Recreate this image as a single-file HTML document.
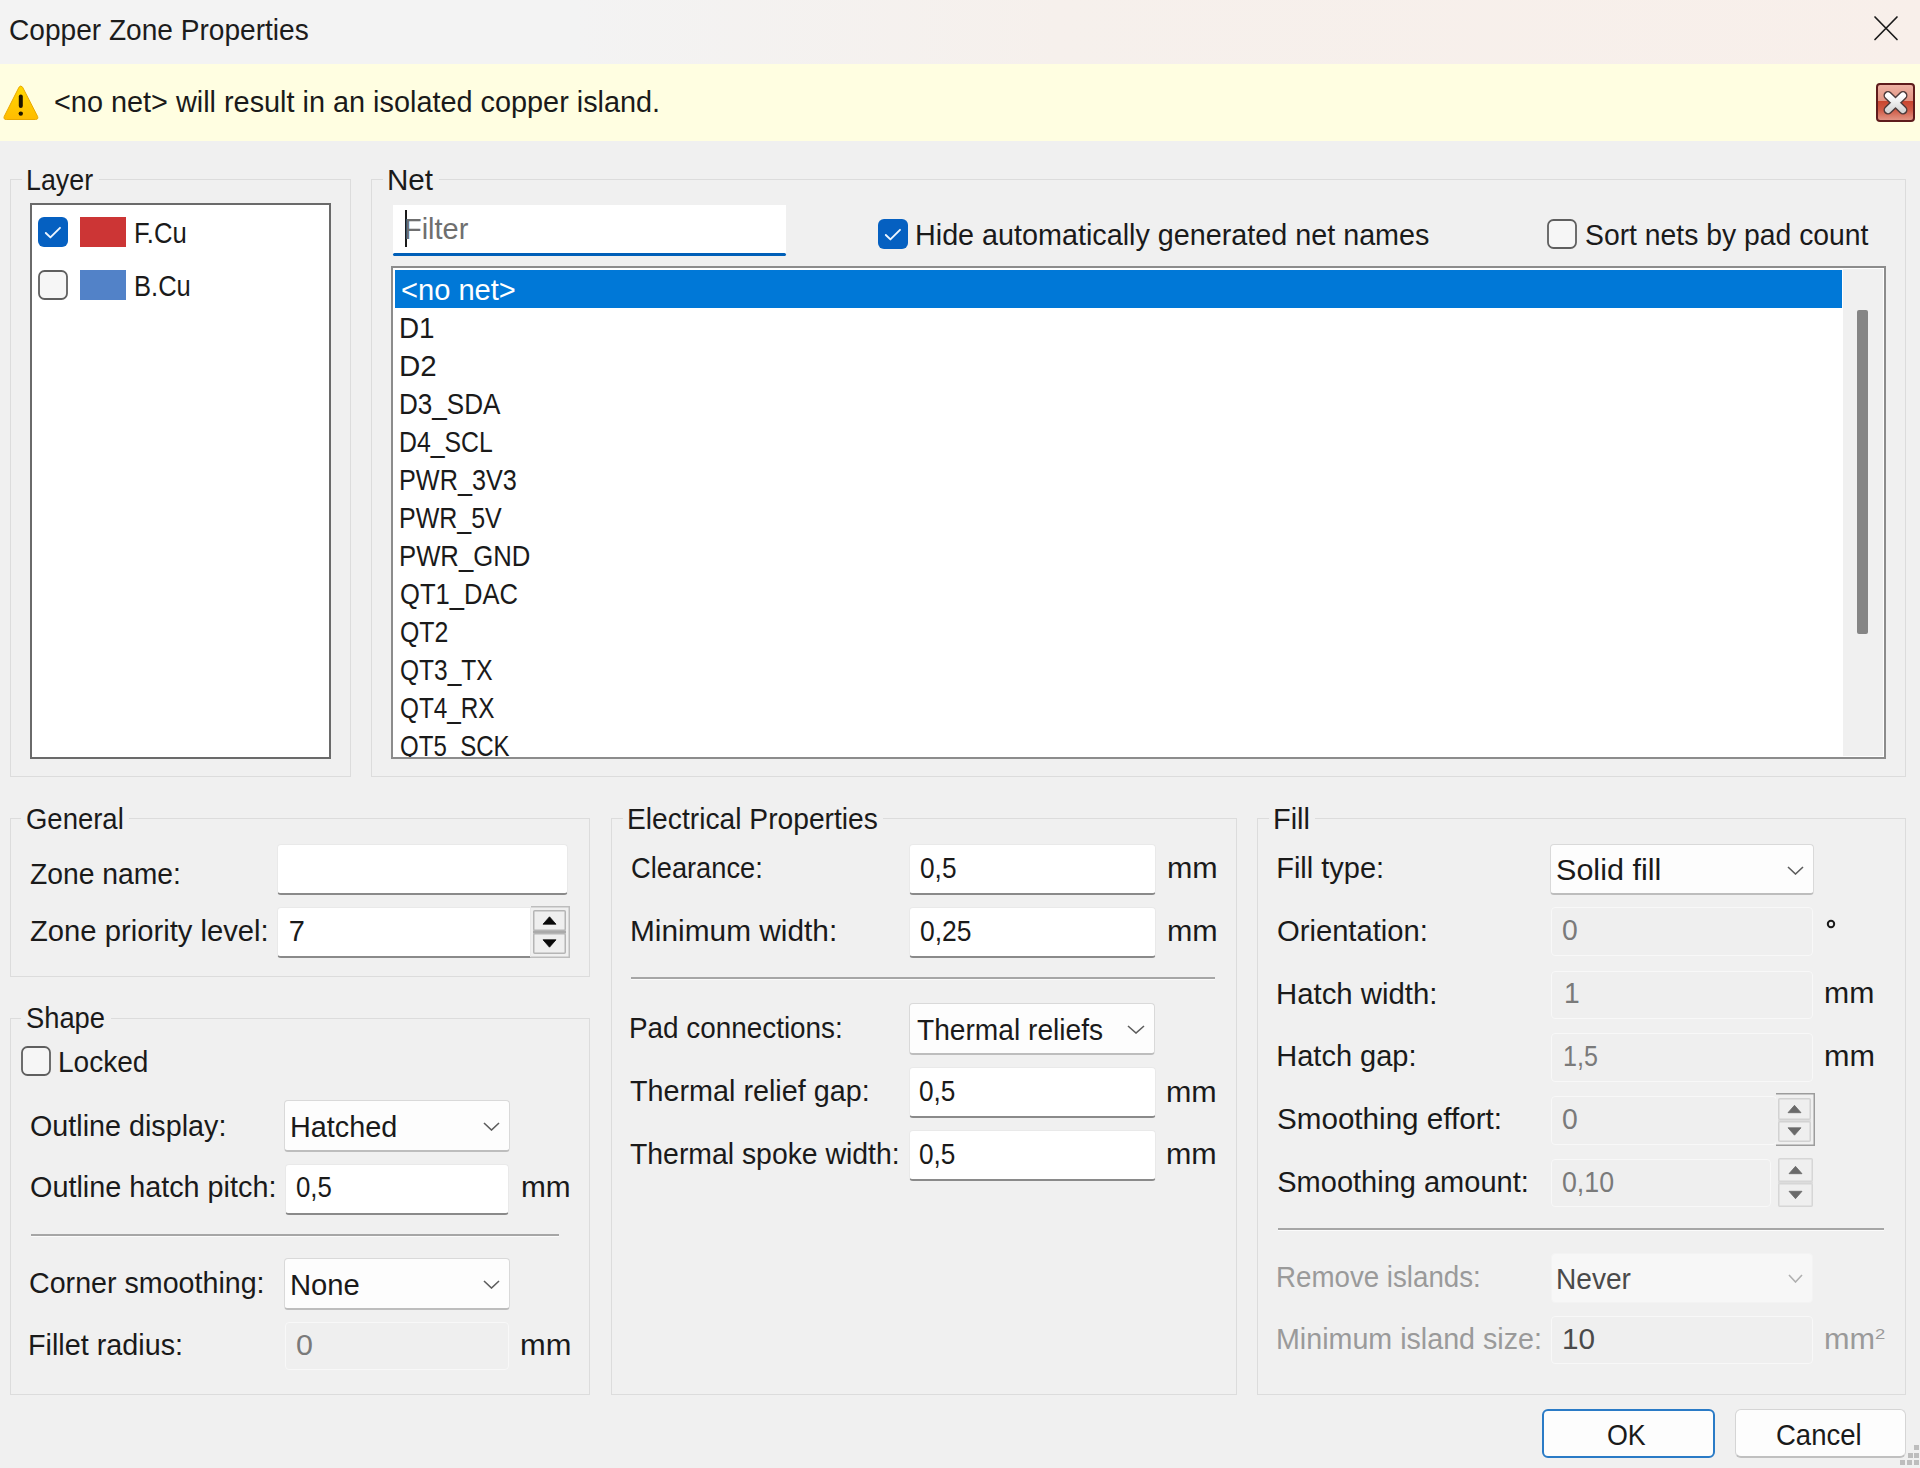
<!DOCTYPE html>
<html><head><meta charset="utf-8"><title>Copper Zone Properties</title>
<style>
html,body{margin:0;padding:0;}
body{width:1920px;height:1468px;position:relative;overflow:hidden;background:#f0f0f0;font-family:"Liberation Sans",sans-serif;}
body div, body svg{position:absolute;}
.t{white-space:pre;line-height:1;transform-origin:0 0;}
</style></head><body>
<div style="left:0px;top:0px;width:1920px;height:64px;background:linear-gradient(to right,#f3f3f3 0%,#f3f3f3 30%,#f6f0ec 55%,#f8efea 100%);"></div>
<div class="t" style="left:9.20px;top:16.20px;font-size:29px;color:#1c1c1c;transform:scaleX(0.9684);">Copper Zone Properties</div>
<svg style="left:1872px;top:14px;" width="28" height="28" viewBox="0 0 28 28"><path d="M3,3 L25,25.5 M25,3 L3,25.5" stroke="#1a1a1a" stroke-width="1.7" stroke-linecap="round"/></svg>
<div style="left:0px;top:64px;width:1920px;height:77px;background:#fffee1;"></div>
<svg style="left:2px;top:84px;" width="38" height="38" viewBox="0 0 38 38"><defs><linearGradient id="wg" x1="0" y1="0" x2="0" y2="1"><stop offset="0" stop-color="#ffd800"/><stop offset="1" stop-color="#ffbc00"/></linearGradient></defs><path d="M17,3.2 Q18.8,0.8 20.6,3.2 L35.6,32.5 Q36.6,35.5 33.5,35.5 L4.3,35.5 Q1.2,35.5 2.2,32.5 Z" fill="url(#wg)" stroke="#e9a800" stroke-width="1"/><rect x="16.8" y="10.5" width="4" height="13.5" rx="2" fill="#1d1400"/><circle cx="18.8" cy="29.6" r="2.2" fill="#1d1400"/></svg>
<div class="t" style="left:53.56px;top:88.20px;font-size:29px;color:#1a1a1a;transform:scaleX(0.9947);">&lt;no net&gt; will result in an isolated copper island.</div>
<svg style="left:1876px;top:83px;" width="39" height="39" viewBox="0 0 39 39"><defs><linearGradient id="cg" x1="0" y1="0" x2="0" y2="1"><stop offset="0" stop-color="#eeb3a4"/><stop offset="0.45" stop-color="#e39584"/><stop offset="0.46" stop-color="#c9452e"/><stop offset="0.7" stop-color="#cf5a45"/><stop offset="1" stop-color="#e49a8a"/></linearGradient></defs><rect x="1" y="1" width="37" height="37" rx="3" fill="url(#cg)" stroke="#5e1c1c" stroke-width="2"/><defs><linearGradient id="xg" x1="0" y1="0" x2="0" y2="1"><stop offset="0" stop-color="#ffffff"/><stop offset="1" stop-color="#d8d8d8"/></linearGradient></defs><path d="M12,12.5 L27,27 M27,12.5 L12,27" stroke="#4d3b3b" stroke-width="9" stroke-linecap="round"/><path d="M12,12.5 L27,27 M27,12.5 L12,27" stroke="url(#xg)" stroke-width="6" stroke-linecap="round"/></svg>
<div style="left:10px;top:179px;width:341px;height:598px;border:1px solid #dcdcdc;box-sizing:border-box;"></div>
<div style="left:22px;top:177px;width:77px;height:5px;background:#f0f0f0;"></div>
<div class="t" style="left:25.85px;top:166.20px;font-size:29px;color:#1a1a1a;transform:scaleX(0.9248);">Layer</div>
<div style="left:30px;top:203px;width:301px;height:556px;background:#fff;border:2px solid #6a6a6a;box-sizing:border-box;"></div>
<svg style="left:38px;top:217px;" width="30" height="30" viewBox="0 0 30 30"><rect x="0" y="0" width="30" height="30" rx="6" fill="#0560c1"/><polyline points="7.8,16 12.4,20.4 22,10.8" fill="none" stroke="#eef6ff" stroke-width="1.9" stroke-linecap="round" stroke-linejoin="round"/></svg>
<div style="left:80px;top:217px;width:46px;height:30px;background:#cc3535;"></div>
<div class="t" style="left:133.95px;top:218.70px;font-size:29px;color:#1a1a1a;transform:scaleX(0.8846);">F.Cu</div>
<svg style="left:38px;top:270px;" width="30" height="30" viewBox="0 0 30 30"><rect x="1" y="1" width="28" height="28" rx="5.5" fill="#f6f6f6" stroke="#5f5f5f" stroke-width="1.8"/></svg>
<div style="left:80px;top:270px;width:46px;height:30px;background:#5282c8;"></div>
<div class="t" style="left:133.96px;top:271.70px;font-size:29px;color:#1a1a1a;transform:scaleX(0.8808);">B.Cu</div>
<div style="left:371px;top:179px;width:1535px;height:598px;border:1px solid #dcdcdc;box-sizing:border-box;"></div>
<div style="left:383px;top:177px;width:56px;height:5px;background:#f0f0f0;"></div>
<div class="t" style="left:386.63px;top:166.20px;font-size:29px;color:#1a1a1a;transform:scaleX(1.0204);">Net</div>
<div style="left:393px;top:205px;width:393px;height:51px;background:#fff;"></div>
<div style="left:393px;top:253px;width:393px;height:3px;background:#005fb8;border-radius:2px;"></div>
<div style="left:404.5px;top:210px;width:2.0px;height:37px;background:#1a1a1a;"></div>
<div class="t" style="left:403.68px;top:214.95px;font-size:29px;color:#6f6f6f;transform:scaleX(0.9980);">Filter</div>
<svg style="left:878px;top:219px;" width="30" height="30" viewBox="0 0 30 30"><rect x="0" y="0" width="30" height="30" rx="6" fill="#0560c1"/><polyline points="7.8,16 12.4,20.4 22,10.8" fill="none" stroke="#eef6ff" stroke-width="1.9" stroke-linecap="round" stroke-linejoin="round"/></svg>
<div class="t" style="left:915.20px;top:221.20px;font-size:29px;color:#1a1a1a;transform:scaleX(0.9910);">Hide automatically generated net names</div>
<svg style="left:1547px;top:219px;" width="30" height="30" viewBox="0 0 30 30"><rect x="1" y="1" width="28" height="28" rx="5.5" fill="#f6f6f6" stroke="#5f5f5f" stroke-width="1.8"/></svg>
<div class="t" style="left:1584.73px;top:221.20px;font-size:29px;color:#1a1a1a;transform:scaleX(0.9768);">Sort nets by pad count</div>
<div style="left:391px;top:266px;width:1495px;height:493px;background:#fff;border:2px solid #8c8c8c;box-sizing:border-box;"></div>
<div style="left:1843px;top:269px;width:40px;height:487px;background:#f0f0f0;"></div>
<div style="left:1857px;top:310px;width:11px;height:324px;background:#858585;border-radius:2px;"></div>
<div style="left:395px;top:270px;width:1447px;height:38px;background:#0078d7;"></div>
<div style="left:393px;top:268px;width:1450px;height:489px;overflow:hidden;">
<div class="t" style="left:8.05px;top:7.70px;font-size:29px;color:#ffffff;transform:scaleX(1.0031);">&lt;no net&gt;</div>
<div class="t" style="left:5.77px;top:45.70px;font-size:29px;color:#1a1a1a;transform:scaleX(0.9595);">D1</div>
<div class="t" style="left:5.64px;top:83.70px;font-size:29px;color:#1a1a1a;transform:scaleX(1.0179);">D2</div>
<div class="t" style="left:5.91px;top:121.70px;font-size:29px;color:#1a1a1a;transform:scaleX(0.8996);">D3_SDA</div>
<div class="t" style="left:6.02px;top:159.70px;font-size:29px;color:#1a1a1a;transform:scaleX(0.8550);">D4_SCL</div>
<div class="t" style="left:5.98px;top:197.70px;font-size:29px;color:#1a1a1a;transform:scaleX(0.8702);">PWR_3V3</div>
<div class="t" style="left:6.00px;top:235.70px;font-size:29px;color:#1a1a1a;transform:scaleX(0.8619);">PWR_5V</div>
<div class="t" style="left:5.95px;top:273.70px;font-size:29px;color:#1a1a1a;transform:scaleX(0.8854);">PWR_GND</div>
<div class="t" style="left:6.85px;top:311.70px;font-size:29px;color:#1a1a1a;transform:scaleX(0.8815);">QT1_DAC</div>
<div class="t" style="left:6.88px;top:349.70px;font-size:29px;color:#1a1a1a;transform:scaleX(0.8574);">QT2</div>
<div class="t" style="left:6.90px;top:387.70px;font-size:29px;color:#1a1a1a;transform:scaleX(0.8458);">QT3_TX</div>
<div class="t" style="left:6.91px;top:425.70px;font-size:29px;color:#1a1a1a;transform:scaleX(0.8384);">QT4_RX</div>
<div class="t" style="left:6.92px;top:463.70px;font-size:29px;color:#1a1a1a;transform:scaleX(0.8291);">QT5_SCK</div>
</div>
<div style="left:10px;top:818px;width:580px;height:159px;border:1px solid #dcdcdc;box-sizing:border-box;"></div>
<div style="left:21px;top:816px;width:108px;height:5px;background:#f0f0f0;"></div>
<div class="t" style="left:26.13px;top:804.95px;font-size:29px;color:#1a1a1a;transform:scaleX(0.9473);">General</div>
<div class="t" style="left:29.65px;top:859.95px;font-size:29px;color:#1a1a1a;transform:scaleX(0.9753);">Zone name:</div>
<div style="left:277px;top:844px;width:291px;height:51px;background:#fff;border:1px solid #e9e9e9;border-bottom:2px solid #8a8a8a;border-radius:4px;box-sizing:border-box;"></div>
<div class="t" style="left:29.62px;top:917.45px;font-size:29px;color:#1a1a1a;transform:scaleX(1.0073);">Zone priority level:</div>
<div style="left:277px;top:907px;width:254px;height:51px;background:#fff;border:1px solid #e9e9e9;border-bottom:2px solid #8a8a8a;border-radius:4px 0 0 4px;box-sizing:border-box;"></div>
<svg style="left:530px;top:905px;" width="41" height="54" viewBox="530 905 41 54"><path d="M531,906.75 L569.25,906.75 L569.25,957.25 L531,957.25" fill="#f0f0f0" stroke="#bdbdbd" stroke-width="1.5"/><rect x="533" y="930.5" width="33" height="3" fill="#aaaaaa"/><rect x="533.75" y="910.75" width="31.5" height="19.5" rx="1" fill="#efefef" stroke="#b5b5b5" stroke-width="1.5"/><rect x="533.75" y="933.75" width="31.5" height="19.5" rx="1" fill="#efefef" stroke="#b5b5b5" stroke-width="1.5"/><polygon points="543.0,924.2 556.0,924.2 549.5,916.8" fill="#0a0a0a" stroke="#0a0a0a" stroke-width="0.8" stroke-linejoin="round"/><polygon points="543.0,939.8 556.0,939.8 549.5,947.2" fill="#0a0a0a" stroke="#0a0a0a" stroke-width="0.8" stroke-linejoin="round"/></svg>
<div class="t" style="left:288.85px;top:917.20px;font-size:29px;color:#1a1a1a;">7</div>
<div style="left:10px;top:1018px;width:580px;height:377px;border:1px solid #dcdcdc;box-sizing:border-box;"></div>
<div style="left:21px;top:1016px;width:90px;height:5px;background:#f0f0f0;"></div>
<div class="t" style="left:26.27px;top:1004.20px;font-size:29px;color:#1a1a1a;transform:scaleX(0.9421);">Shape</div>
<svg style="left:21px;top:1046px;" width="30" height="30" viewBox="0 0 30 30"><rect x="1" y="1" width="28" height="28" rx="5.5" fill="#f6f6f6" stroke="#5f5f5f" stroke-width="1.8"/></svg>
<div class="t" style="left:58.06px;top:1048.20px;font-size:29px;color:#1a1a1a;transform:scaleX(0.9673);">Locked</div>
<div class="t" style="left:29.51px;top:1111.50px;font-size:29px;color:#1a1a1a;transform:scaleX(0.9907);">Outline display:</div>
<div style="left:284px;top:1100px;width:226px;height:52px;background:#fdfdfd;border:1px solid #d9d9d9;border-bottom:2px solid #bdbdbd;border-radius:4px;box-sizing:border-box;"></div>
<div class="t" style="left:290.00px;top:1112.80px;font-size:29px;color:#1a1a1a;transform:scaleX(0.9931);">Hatched</div>
<svg style="left:483px;top:1122px;" width="17" height="9" viewBox="0 0 17 9"><polyline points="1,1 8.5,8 16,1" fill="none" stroke="#5c5c5c" stroke-width="1.6"/></svg>
<div class="t" style="left:29.50px;top:1173.40px;font-size:29px;color:#1a1a1a;transform:scaleX(0.9925);">Outline hatch pitch:</div>
<div style="left:285px;top:1164px;width:224px;height:51px;background:#fff;border:1px solid #e9e9e9;border-bottom:2px solid #8a8a8a;border-radius:4px;box-sizing:border-box;"></div>
<div class="t" style="left:296.47px;top:1173.40px;font-size:29px;color:#1a1a1a;transform:scaleX(0.8897);">0,5</div>
<div class="t" style="left:520.56px;top:1173.20px;font-size:29px;color:#1a1a1a;transform:scaleX(1.0278);">mm</div>
<div style="left:31px;top:1234px;width:528px;height:2px;background:#a6a6a6;"></div>
<div style="left:31px;top:1236px;width:528px;height:1px;background:#fbfbfb;"></div>
<div class="t" style="left:29.27px;top:1268.50px;font-size:29px;color:#1a1a1a;transform:scaleX(0.9874);">Corner smoothing:</div>
<div style="left:284px;top:1258px;width:226px;height:52px;background:#fdfdfd;border:1px solid #d9d9d9;border-bottom:2px solid #bdbdbd;border-radius:4px;box-sizing:border-box;"></div>
<div class="t" style="left:289.86px;top:1271.10px;font-size:29px;color:#1a1a1a;transform:scaleX(1.0078);">None</div>
<svg style="left:483px;top:1280px;" width="17" height="9" viewBox="0 0 17 9"><polyline points="1,1 8.5,8 16,1" fill="none" stroke="#5c5c5c" stroke-width="1.6"/></svg>
<div class="t" style="left:28.40px;top:1330.80px;font-size:29px;color:#1a1a1a;transform:scaleX(0.9915);">Fillet radius:</div>
<div style="left:285px;top:1322px;width:224px;height:48px;background:#efefef;border:1px solid #f8f8f8;border-radius:4px;box-sizing:border-box;"></div>
<div class="t" style="left:295.78px;top:1330.80px;font-size:29px;color:#7a7a7a;transform:scaleX(1.0489);">0</div>
<div class="t" style="left:519.50px;top:1330.80px;font-size:29px;color:#1a1a1a;transform:scaleX(1.0636);">mm</div>
<div style="left:611px;top:818px;width:626px;height:577px;border:1px solid #dcdcdc;box-sizing:border-box;"></div>
<div style="left:623px;top:816px;width:260px;height:5px;background:#f0f0f0;"></div>
<div class="t" style="left:626.74px;top:805.20px;font-size:29px;color:#1a1a1a;transform:scaleX(0.9730);">Electrical Properties</div>
<div class="t" style="left:630.54px;top:854.00px;font-size:29px;color:#1a1a1a;transform:scaleX(0.9394);">Clearance:</div>
<div style="left:909px;top:844px;width:247px;height:51px;background:#fff;border:1px solid #e9e9e9;border-bottom:2px solid #8a8a8a;border-radius:4px;box-sizing:border-box;"></div>
<div class="t" style="left:919.55px;top:854.20px;font-size:29px;color:#1a1a1a;transform:scaleX(0.9055);">0,5</div>
<div class="t" style="left:1166.52px;top:854.20px;font-size:29px;color:#1a1a1a;transform:scaleX(1.0502);">mm</div>
<div class="t" style="left:629.51px;top:916.50px;font-size:29px;color:#1a1a1a;transform:scaleX(1.0286);">Minimum width:</div>
<div style="left:909px;top:907px;width:247px;height:51px;background:#fff;border:1px solid #e9e9e9;border-bottom:2px solid #8a8a8a;border-radius:4px;box-sizing:border-box;"></div>
<div class="t" style="left:919.54px;top:916.60px;font-size:29px;color:#1a1a1a;transform:scaleX(0.9134);">0,25</div>
<div class="t" style="left:1166.52px;top:916.60px;font-size:29px;color:#1a1a1a;transform:scaleX(1.0502);">mm</div>
<div style="left:631px;top:977px;width:584px;height:2px;background:#a6a6a6;"></div>
<div style="left:631px;top:979px;width:584px;height:1px;background:#fbfbfb;"></div>
<div class="t" style="left:629.37px;top:1014.30px;font-size:29px;color:#1a1a1a;transform:scaleX(0.9609);">Pad connections:</div>
<div style="left:909px;top:1003px;width:246px;height:52px;background:#fdfdfd;border:1px solid #d9d9d9;border-bottom:2px solid #bdbdbd;border-radius:4px;box-sizing:border-box;"></div>
<div class="t" style="left:917.44px;top:1016.00px;font-size:29px;color:#1a1a1a;transform:scaleX(0.9704);">Thermal reliefs</div>
<svg style="left:1127px;top:1025px;" width="18" height="9" viewBox="0 0 18 9"><polyline points="1,1 9.0,8 17,1" fill="none" stroke="#5c5c5c" stroke-width="1.6"/></svg>
<div class="t" style="left:630.43px;top:1076.90px;font-size:29px;color:#1a1a1a;transform:scaleX(0.9911);">Thermal relief gap:</div>
<div style="left:909px;top:1067px;width:247px;height:51px;background:#fff;border:1px solid #e9e9e9;border-bottom:2px solid #8a8a8a;border-radius:4px;box-sizing:border-box;"></div>
<div class="t" style="left:918.65px;top:1076.90px;font-size:29px;color:#1a1a1a;transform:scaleX(0.9029);">0,5</div>
<div class="t" style="left:1165.92px;top:1077.90px;font-size:29px;color:#1a1a1a;transform:scaleX(1.0502);">mm</div>
<div class="t" style="left:630.43px;top:1139.80px;font-size:29px;color:#1a1a1a;transform:scaleX(0.9783);">Thermal spoke width:</div>
<div style="left:909px;top:1130px;width:247px;height:51px;background:#fff;border:1px solid #e9e9e9;border-bottom:2px solid #8a8a8a;border-radius:4px;box-sizing:border-box;"></div>
<div class="t" style="left:918.65px;top:1139.80px;font-size:29px;color:#1a1a1a;transform:scaleX(0.9029);">0,5</div>
<div class="t" style="left:1165.92px;top:1139.80px;font-size:29px;color:#1a1a1a;transform:scaleX(1.0502);">mm</div>
<div style="left:1257px;top:818px;width:649px;height:577px;border:1px solid #dcdcdc;box-sizing:border-box;"></div>
<div style="left:1269px;top:816px;width:46px;height:5px;background:#f0f0f0;"></div>
<div class="t" style="left:1272.98px;top:804.70px;font-size:29px;color:#1a1a1a;transform:scaleX(0.9979);">Fill</div>
<div class="t" style="left:1276.18px;top:853.50px;font-size:29px;color:#1a1a1a;">Fill type:</div>
<div style="left:1550px;top:844px;width:264px;height:51px;background:#fdfdfd;border:1px solid #d9d9d9;border-bottom:2px solid #bdbdbd;border-radius:4px;box-sizing:border-box;"></div>
<div class="t" style="left:1556.43px;top:855.70px;font-size:29px;color:#1a1a1a;transform:scaleX(1.0536);">Solid fill</div>
<svg style="left:1787px;top:866px;" width="17" height="9" viewBox="0 0 17 9"><polyline points="1,1 8.5,8 16,1" fill="none" stroke="#5c5c5c" stroke-width="1.6"/></svg>
<div class="t" style="left:1277.19px;top:916.50px;font-size:29px;color:#1a1a1a;transform:scaleX(1.0064);">Orientation:</div>
<div style="left:1551px;top:907px;width:262px;height:49px;background:#efefef;border:1px solid #f8f8f8;border-radius:4px;box-sizing:border-box;"></div>
<div class="t" style="left:1562.27px;top:916.10px;font-size:29px;color:#7a7a7a;transform:scaleX(0.9770);">0</div>
<svg style="left:1825px;top:918px;" width="12" height="12" viewBox="0 0 12 12"><circle cx="6" cy="6" r="3.2" fill="none" stroke="#1a1a1a" stroke-width="2"/></svg>
<div class="t" style="left:1276.25px;top:979.80px;font-size:29px;color:#1a1a1a;transform:scaleX(1.0118);">Hatch width:</div>
<div style="left:1551px;top:971px;width:262px;height:48px;background:#efefef;border:1px solid #f8f8f8;border-radius:4px;box-sizing:border-box;"></div>
<div class="t" style="left:1563.58px;top:979.20px;font-size:29px;color:#7a7a7a;transform:scaleX(0.9750);">1</div>
<div class="t" style="left:1824.04px;top:979.20px;font-size:29px;color:#1a1a1a;transform:scaleX(1.0412);">mm</div>
<div class="t" style="left:1276.28px;top:1041.60px;font-size:29px;color:#1a1a1a;">Hatch gap:</div>
<div style="left:1551px;top:1033px;width:262px;height:49px;background:#efefef;border:1px solid #f8f8f8;border-radius:4px;box-sizing:border-box;"></div>
<div class="t" style="left:1563.12px;top:1041.60px;font-size:29px;color:#7a7a7a;transform:scaleX(0.8654);">1,5</div>
<div class="t" style="left:1823.81px;top:1041.60px;font-size:29px;color:#1a1a1a;transform:scaleX(1.0546);">mm</div>
<div class="t" style="left:1277.27px;top:1105.40px;font-size:29px;color:#1a1a1a;transform:scaleX(1.0211);">Smoothing effort:</div>
<div style="left:1551px;top:1096px;width:226px;height:49px;background:#efefef;border:1px solid #f8f8f8;border-radius:4px;box-sizing:border-box;"></div>
<svg style="left:1775px;top:1092px;" width="41" height="55" viewBox="1775 1092 41 55"><path d="M1776,1093.75 L1814.25,1093.75 L1814.25,1145.25 L1776,1145.25" fill="#f0f0f0" stroke="#9c9c9c" stroke-width="1.5"/><rect x="1778" y="1119.5" width="33" height="2" fill="#dcdcdc"/><rect x="1778.75" y="1098.75" width="31.5" height="20.5" rx="1" fill="#efefef" stroke="#d2d2d2" stroke-width="1.5"/><rect x="1778.75" y="1121.75" width="31.5" height="19.5" rx="1" fill="#efefef" stroke="#d2d2d2" stroke-width="1.5"/><polygon points="1788.0,1112.7 1801.0,1112.7 1794.5,1105.3" fill="#6a6a6a" stroke="#6a6a6a" stroke-width="0.8" stroke-linejoin="round"/><polygon points="1788.0,1127.8 1801.0,1127.8 1794.5,1135.2" fill="#6a6a6a" stroke="#6a6a6a" stroke-width="0.8" stroke-linejoin="round"/></svg>
<div class="t" style="left:1562.27px;top:1105.40px;font-size:29px;color:#7a7a7a;transform:scaleX(0.9770);">0</div>
<div class="t" style="left:1277.29px;top:1168.20px;font-size:29px;color:#1a1a1a;">Smoothing amount:</div>
<div style="left:1551px;top:1159px;width:220px;height:48px;background:#efefef;border:1px solid #f8f8f8;border-radius:4px;box-sizing:border-box;"></div>
<svg style="left:1777px;top:1157px;" width="37" height="51" viewBox="1777 1157 37 51"><rect x="1778" y="1181.5" width="35" height="2" fill="#dcdcdc"/><rect x="1778.75" y="1158.75" width="33.5" height="22.5" rx="1" fill="#efefef" stroke="#d6d6d6" stroke-width="1.5"/><rect x="1778.75" y="1183.75" width="33.5" height="22.5" rx="1" fill="#efefef" stroke="#d6d6d6" stroke-width="1.5"/><polygon points="1789.0,1173.7 1802.0,1173.7 1795.5,1166.3" fill="#6a6a6a" stroke="#6a6a6a" stroke-width="0.8" stroke-linejoin="round"/><polygon points="1789.0,1191.3 1802.0,1191.3 1795.5,1198.7" fill="#6a6a6a" stroke="#6a6a6a" stroke-width="0.8" stroke-linejoin="round"/></svg>
<div class="t" style="left:1561.93px;top:1168.20px;font-size:29px;color:#7a7a7a;transform:scaleX(0.9220);">0,10</div>
<div style="left:1278px;top:1228px;width:606px;height:2px;background:#a6a6a6;"></div>
<div style="left:1278px;top:1230px;width:606px;height:1px;background:#fbfbfb;"></div>
<div class="t" style="left:1276.38px;top:1262.50px;font-size:29px;color:#9a9a9a;transform:scaleX(0.9552);">Remove islands:</div>
<div style="left:1551px;top:1253px;width:262px;height:50px;background:#f7f7f7;border:1px solid #f3f3f3;border-radius:4px;box-sizing:border-box;"></div>
<div class="t" style="left:1555.55px;top:1265.20px;font-size:29px;color:#4a4a4a;transform:scaleX(0.9687);">Never</div>
<svg style="left:1788px;top:1274px;" width="15" height="9" viewBox="0 0 15 9"><polyline points="1,1 7.5,8 14,1" fill="none" stroke="#b0b0b0" stroke-width="1.6"/></svg>
<div class="t" style="left:1276.31px;top:1325.20px;font-size:29px;color:#9a9a9a;transform:scaleX(0.9879);">Minimum island size:</div>
<div style="left:1551px;top:1316px;width:262px;height:48px;background:#efefef;border:1px solid #f8f8f8;border-radius:4px;box-sizing:border-box;"></div>
<div class="t" style="left:1561.77px;top:1325.20px;font-size:29px;color:#4a4a4a;transform:scaleX(1.0241);">10</div>
<div class="t" style="left:1823.81px;top:1325.20px;font-size:29px;color:#9a9a9a;transform:scaleX(1.0569);">mm</div>
<div class="t" style="left:1875.08px;top:1326.05px;font-size:15px;color:#9a9a9a;transform:scaleX(1.2308);">2</div>
<div style="left:1542px;top:1409px;width:173px;height:49px;background:#fdfdfd;border:2px solid #2a7bc6;border-radius:6px;box-sizing:border-box;"></div>
<div class="t" style="left:1607.49px;top:1421.20px;font-size:29px;color:#1a1a1a;transform:scaleX(0.9253);">OK</div>
<div style="left:1735px;top:1409px;width:171px;height:49px;background:#fdfdfd;border:1px solid #d5d5d5;border-bottom:2px solid #c0c0c0;border-radius:6px;box-sizing:border-box;"></div>
<div style="left:1914px;top:1445px;width:5px;height:5px;background:#bdbdbd;"></div>
<div style="left:1908px;top:1453px;width:5px;height:5px;background:#bdbdbd;"></div>
<div style="left:1914px;top:1453px;width:5px;height:5px;background:#bdbdbd;"></div>
<div style="left:1900px;top:1460px;width:5px;height:5px;background:#bdbdbd;"></div>
<div style="left:1907px;top:1460px;width:5px;height:5px;background:#bdbdbd;"></div>
<div style="left:1914px;top:1460px;width:5px;height:5px;background:#bdbdbd;"></div>
<div class="t" style="left:1776.22px;top:1421.20px;font-size:29px;color:#1a1a1a;transform:scaleX(0.9487);">Cancel</div>
</body></html>
